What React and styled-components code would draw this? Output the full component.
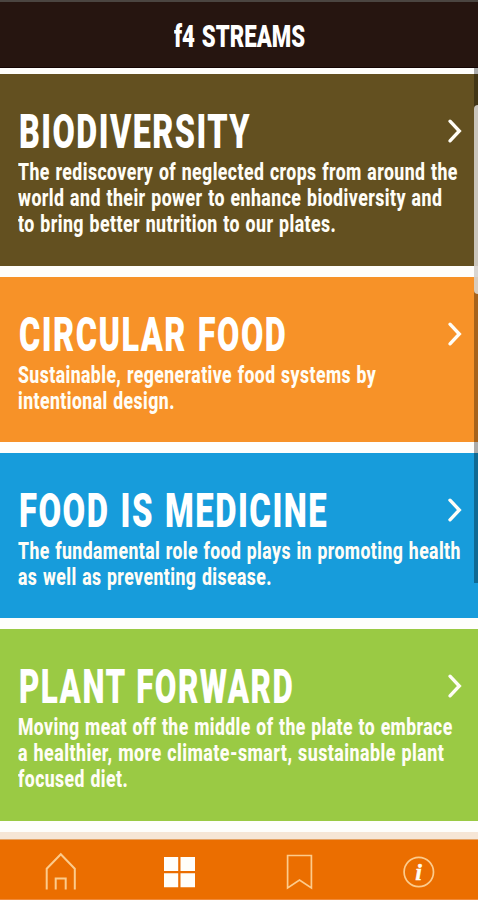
import React, { useLayoutEffect, useRef, useState } from 'react';
import styled, { createGlobalStyle } from 'styled-components';

const GlobalStyle = createGlobalStyle`
  * { box-sizing: border-box; }
  html, body { margin: 0; padding: 0; overflow: hidden; }
  body { background: #fefefc; font-family: Roboto, "Liberation Sans", sans-serif; }
`;

const Screen = styled.div`
  position: relative;
  display: flex;
  flex-direction: column;
  width: 478px;
  height: 900px;
  overflow: hidden;
  background: #fefefc;
`;

const Header = styled.header`
  flex: none;
  display: flex;
  justify-content: center;
  height: 68px;
  padding-top: 17px;
  border-top: 2px solid #4b4541;
  border-bottom: 1px solid #140504;
  background: #261510;
`;

const HeaderTitle = styled.h1`
  width: 131px;
  margin: 0;
  color: #fff;
  font-size: 31px;
  font-weight: 900;
  line-height: 36px;
  word-spacing: 2px;
`;

const Streams = styled.main`
  flex: none;
  display: flex;
  flex-direction: column;
  gap: 11px;
  height: 764px;
  padding-top: 6px;
`;

const Card = styled.article`
  flex: none;
  display: flex;
  justify-content: space-between;
  height: ${(p) => p.$height}px;
  padding: 0 16px 0 18px;
  background: ${(p) => p.$color};
`;

const CardText = styled.div`
  width: 400px;
  padding-top: 30px;
`;

const CardTitle = styled.h2`
  margin: 0 0 0 1px;
  color: #fff;
  font-size: 48px;
  font-weight: 900;
  line-height: 55px;
  letter-spacing: 2.2px;
  word-spacing: 2px;
`;

const CardBody = styled.p`
  margin: 0;
  color: #fffdf6;
  font-size: 24px;
  font-weight: 800;
  line-height: 26px;
  letter-spacing: 0.6px;
  word-spacing: 1px;
`;

const Chevron = styled.svg`
  flex: none;
  width: 16px;
  height: 28px;
  margin-top: 43px;
`;

const Line = styled.span`
  display: block;
  width: max-content;
  white-space: nowrap;
  transform-origin: 0 50%;
`;

const ScrollTrack = styled.div`
  position: absolute;
  top: 68px;
  right: 0;
  width: 4px;
  height: 515px;
  padding-top: 37px;
  background: rgba(0, 0, 0, 0.32);
`;

const ScrollThumb = styled.div`
  height: 189px;
  border-radius: 4px 0 0 4px;
  background: rgba(224, 221, 216, 0.85);
`;

const TabBar = styled.nav`
  flex: none;
  display: grid;
  grid-template-columns: repeat(4, 1fr);
  height: 68px;
  border-top: 7px solid #f6e6d6;
  border-bottom: 1px solid #f08a3a;
  background: #eb6e00;
  box-shadow: inset 0 1px 0 #e5a365;
`;

const Tab = styled.a`
  display: flex;
  align-items: flex-start;
  justify-content: center;
  padding-top: 13px;
`;

const TabIcon = styled.svg`
  width: 40px;
  height: 40px;
  overflow: visible;
`;

const InfoLetter = styled.text`
  font-family: "Liberation Serif", serif;
  font-size: 24px;
  font-style: italic;
  font-weight: 700;
`;

function FittedLine({ width, children }) {
  const ref = useRef(null);
  const [scale, setScale] = useState(1);
  useLayoutEffect(() => {
    setScale(width / ref.current.offsetWidth);
  }, [width]);
  return (
    <Line ref={ref} style={{ transform: `scaleX(${scale})` }}>
      {children}
    </Line>
  );
}

const streams = [
  {
    title: ['BIODIVERSITY', 232],
    color: '#635020',
    height: 192,
    lines: [
      ['The rediscovery of neglected crops from around the', 440],
      ['world and their power to enhance biodiversity and', 424],
      ['to bring better nutrition to our plates.', 318],
    ],
  },
  {
    title: ['CIRCULAR FOOD', 268],
    color: '#f79228',
    height: 165,
    lines: [
      ['Sustainable, regenerative food systems by', 358],
      ['intentional design.', 157],
    ],
  },
  {
    title: ['FOOD IS MEDICINE', 309],
    color: '#179cdb',
    height: 165,
    lines: [
      ['The fundamental role food plays in promoting health', 443],
      ['as well as preventing disease.', 254],
    ],
  },
  {
    title: ['PLANT FORWARD', 275],
    color: '#9aca44',
    height: 192,
    lines: [
      ['Moving meat off the middle of the plate to embrace', 435],
      ['a healthier, more climate-smart, sustainable plant', 426],
      ['focused diet.', 110],
    ],
  },
];

export default function App() {
  return (
    <>
      <GlobalStyle />
      <Screen>
        <Header>
          <HeaderTitle>
            <FittedLine width={131}>f4 STREAMS</FittedLine>
          </HeaderTitle>
        </Header>
        <Streams>
          {streams.map((s) => (
            <Card key={s.title[0]} $color={s.color} $height={s.height}>
              <CardText>
                <CardTitle>
                  <FittedLine width={s.title[1]}>{s.title[0]}</FittedLine>
                </CardTitle>
                <CardBody>
                  {s.lines.map(([text, width]) => (
                    <FittedLine key={text} width={width}>{text}</FittedLine>
                  ))}
                </CardBody>
              </CardText>
              <Chevron viewBox="0 0 16 28" fill="none" stroke="#fffdf6" strokeWidth="3.4" strokeLinecap="round">
                <path d="M4 4.2 L13.3 14 L4 23.8" />
              </Chevron>
            </Card>
          ))}
        </Streams>
        <TabBar>
          <Tab>
            <TabIcon viewBox="0 0 40 40" fill="none" stroke="#fccb8c" strokeWidth="2">
              <path d="M6.7 37.5 V16.7 L20.8 2.2 L34.8 16.7 V37.5 M15.7 37.5 V26.5 H25.7 V37.5" />
            </TabIcon>
          </Tab>
          <Tab>
            <TabIcon viewBox="0 0 40 40" fill="#fffefa">
              <path d="M5 5 H19.2 V19 H5 Z M21.5 5 H36 V19 H21.5 Z M5 21.3 H19.2 V35.3 H5 Z M21.5 21.3 H36 V35.3 H21.5 Z" />
            </TabIcon>
          </Tab>
          <Tab>
            <TabIcon viewBox="0 0 40 40" fill="none" stroke="#fccb8c" strokeWidth="1.7">
              <path d="M8.6 3.5 H32.4 V36 L20.5 28 L8.6 36 Z" />
            </TabIcon>
          </Tab>
          <Tab>
            <TabIcon viewBox="0 0 40 40">
              <circle cx="20.8" cy="20" r="14.7" fill="none" stroke="#fccb8c" strokeWidth="1.7" />
              <InfoLetter x="20.5" y="28" textAnchor="middle" fill="#fffdf6" stroke="#fffdf6" strokeWidth="0.4">i</InfoLetter>
            </TabIcon>
          </Tab>
        </TabBar>
        <ScrollTrack>
          <ScrollThumb />
        </ScrollTrack>
      </Screen>
    </>
  );
}
